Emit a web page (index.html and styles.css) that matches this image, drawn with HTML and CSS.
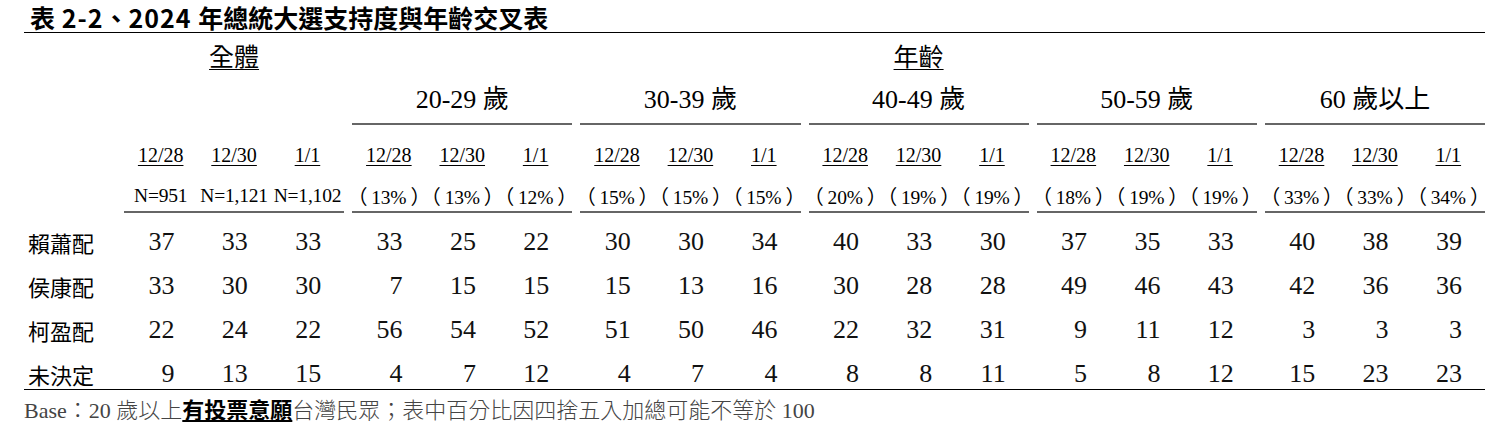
FILE: index.html
```html
<!DOCTYPE html>
<html lang="zh-Hant">
<head>
<meta charset="utf-8">
<title>表 2-2</title>
<link rel="stylesheet" href="styles.css">
</head>
<body>
<div class="page">
  <h1 class="title">表<span class="tl"> 2-2</span>、<span class="tl">2024 </span>年總統大選支持度與年齡交叉表</h1>
  <div class="xtab">
    <div class="row r-top">
      <div class="lab"></div>
      <div class="top-cell"><span class="u">全體</span></div>
      <div class="top-cell span5"><span class="u">年齡</span></div>
    </div>
    <div class="row r-grp">
      <div class="lab"></div>
      <div></div>
      <div class="grp">20-29 歲</div>
      <div class="grp">30-39 歲</div>
      <div class="grp">40-49 歲</div>
      <div class="grp">50-59 歲</div>
      <div class="grp">60 歲以上</div>
    </div>
    <div class="row r-date">
      <div class="lab"></div>
      <div class="tri"><span class="u">12/28</span><span class="u">12/30</span><span class="u">1/1</span></div>
      <div class="tri"><span class="u">12/28</span><span class="u">12/30</span><span class="u">1/1</span></div>
      <div class="tri"><span class="u">12/28</span><span class="u">12/30</span><span class="u">1/1</span></div>
      <div class="tri"><span class="u">12/28</span><span class="u">12/30</span><span class="u">1/1</span></div>
      <div class="tri"><span class="u">12/28</span><span class="u">12/30</span><span class="u">1/1</span></div>
      <div class="tri"><span class="u">12/28</span><span class="u">12/30</span><span class="u">1/1</span></div>
    </div>
    <div class="row r-n">
      <div class="lab"></div>
      <div class="tri ln"><span>N=951</span><span>N=1,121</span><span>N=1,102</span></div>
      <div class="tri ln"><span><i>（</i>13%<i>）</i></span><span><i>（</i>13%<i>）</i></span><span><i>（</i>12%<i>）</i></span></div>
      <div class="tri ln"><span><i>（</i>15%<i>）</i></span><span><i>（</i>15%<i>）</i></span><span><i>（</i>15%<i>）</i></span></div>
      <div class="tri ln"><span><i>（</i>20%<i>）</i></span><span><i>（</i>19%<i>）</i></span><span><i>（</i>19%<i>）</i></span></div>
      <div class="tri ln"><span><i>（</i>18%<i>）</i></span><span><i>（</i>19%<i>）</i></span><span><i>（</i>19%<i>）</i></span></div>
      <div class="tri ln"><span><i>（</i>33%<i>）</i></span><span><i>（</i>33%<i>）</i></span><span><i>（</i>34%<i>）</i></span></div>
    </div>
    <div class="body">
      <div class="row r-data">
        <div class="lab">賴蕭配</div>
        <div class="tri num"><span>37</span><span>33</span><span>33</span></div>
        <div class="tri num"><span>33</span><span>25</span><span>22</span></div>
        <div class="tri num"><span>30</span><span>30</span><span>34</span></div>
        <div class="tri num"><span>40</span><span>33</span><span>30</span></div>
        <div class="tri num"><span>37</span><span>35</span><span>33</span></div>
        <div class="tri num"><span>40</span><span>38</span><span>39</span></div>
      </div>
      <div class="row r-data">
        <div class="lab">侯康配</div>
        <div class="tri num"><span>33</span><span>30</span><span>30</span></div>
        <div class="tri num"><span>7</span><span>15</span><span>15</span></div>
        <div class="tri num"><span>15</span><span>13</span><span>16</span></div>
        <div class="tri num"><span>30</span><span>28</span><span>28</span></div>
        <div class="tri num"><span>49</span><span>46</span><span>43</span></div>
        <div class="tri num"><span>42</span><span>36</span><span>36</span></div>
      </div>
      <div class="row r-data">
        <div class="lab">柯盈配</div>
        <div class="tri num"><span>22</span><span>24</span><span>22</span></div>
        <div class="tri num"><span>56</span><span>54</span><span>52</span></div>
        <div class="tri num"><span>51</span><span>50</span><span>46</span></div>
        <div class="tri num"><span>22</span><span>32</span><span>31</span></div>
        <div class="tri num"><span>9</span><span>11</span><span>12</span></div>
        <div class="tri num"><span>3</span><span>3</span><span>3</span></div>
      </div>
      <div class="row r-data last">
        <div class="lab">未決定</div>
        <div class="tri num"><span>9</span><span>13</span><span>15</span></div>
        <div class="tri num"><span>4</span><span>7</span><span>12</span></div>
        <div class="tri num"><span>4</span><span>7</span><span>4</span></div>
        <div class="tri num"><span>8</span><span>8</span><span>11</span></div>
        <div class="tri num"><span>5</span><span>8</span><span>12</span></div>
        <div class="tri num"><span>15</span><span>23</span><span>23</span></div>
      </div>
    </div>
  </div>
  <p class="note"><span class="lat">Base</span>：<span class="lat">20 </span>歲以上<b class="em">有投票意願</b>台灣民眾；表中百分比因四捨五入加總可能不等於<span class="lat"> 100</span></p>
</div>
</body>
</html>
```
FILE: styles.css
```css
html, body {
  margin: 0;
  padding: 0;
  background: #fff;
}
.page {
  width: 1461px;
  padding-left: 24px;
  color: #000;
  font-family: "Liberation Serif", "Noto Sans CJK TC", serif;
}
.title {
  margin: 0;
  height: 33px;
  padding-left: 6px;
  box-sizing: border-box;
  border-bottom: 1px solid #000;
  font-family: "Noto Sans CJK TC", sans-serif;
  font-weight: 700;
  font-size: 25px;
  line-height: 34px;
  white-space: nowrap;
}
.title .tl {
  font-size: 25px;
  letter-spacing: 1px;
}
.row {
  display: grid;
  grid-template-columns: 92px repeat(6, minmax(0, 1fr));
  column-gap: 8px;
}
.u {
  text-decoration: underline;
  text-underline-offset: 3px;
  text-decoration-thickness: 1px;
}
.r-top {
  height: 44px;
  line-height: 44px;
}
.top-cell {
  text-align: center;
  font-family: "Noto Sans CJK TC", sans-serif;
  font-size: 25px;
  font-weight: 400;
}
.span5 {
  grid-column: 3 / 8;
}
.r-grp {
  height: 44px;
}
.grp {
  text-align: center;
  font-size: 26px;
  line-height: 46px;
  border-bottom: 2px solid #666;
}
.r-date {
  margin-top: 12px;
  height: 44px;
  line-height: 44px;
  font-size: 20px;
}
.tri {
  display: grid;
  grid-template-columns: repeat(3, minmax(0, 1fr));
}
.tri > span {
  text-align: center;
  white-space: nowrap;
}
.r-n {
  height: 34px;
  font-size: 19.5px;
}
.r-n .tri {
  line-height: 38px;
  height: 34px;
  border-bottom: 2px solid #666;
}
.r-n .tri > span {
  letter-spacing: -0.2px;
}
.r-n i {
  font-style: normal;
  font-family: "Noto Sans CJK TC", sans-serif;
  font-size: 20px;
  font-feature-settings: "halt";
}
.r-n i:first-child {
  margin-right: 4px;
}
.r-n i:last-child {
  margin-left: 4px;
}
.body {
  padding-top: 9px;
  border-bottom: 1.5px solid #000;
}
.r-data {
  height: 44px;
  line-height: 44px;
}
.r-data.last {
  height: 37px;
}
.lab {
  padding-left: 4px;
  font-family: "Noto Sans CJK TC", sans-serif;
  font-size: 22px;
  white-space: nowrap;
}
.num {
  font-size: 26px;
  color: #111;
}
.num > span {
  text-align: right;
  padding-right: 23px;
}
.note {
  margin: 0;
  padding-top: 6px;
  font-family: "Noto Sans CJK TC", sans-serif;
  font-weight: 300;
  font-size: 22px;
  line-height: 24px;
  color: #444;
  white-space: nowrap;
}
.note .lat {
  font-family: "Liberation Serif", serif;
  font-weight: 400;
}
.note .em {
  font-weight: 700;
  color: #000;
  text-decoration: underline;
  text-underline-offset: 2px;
}
```
